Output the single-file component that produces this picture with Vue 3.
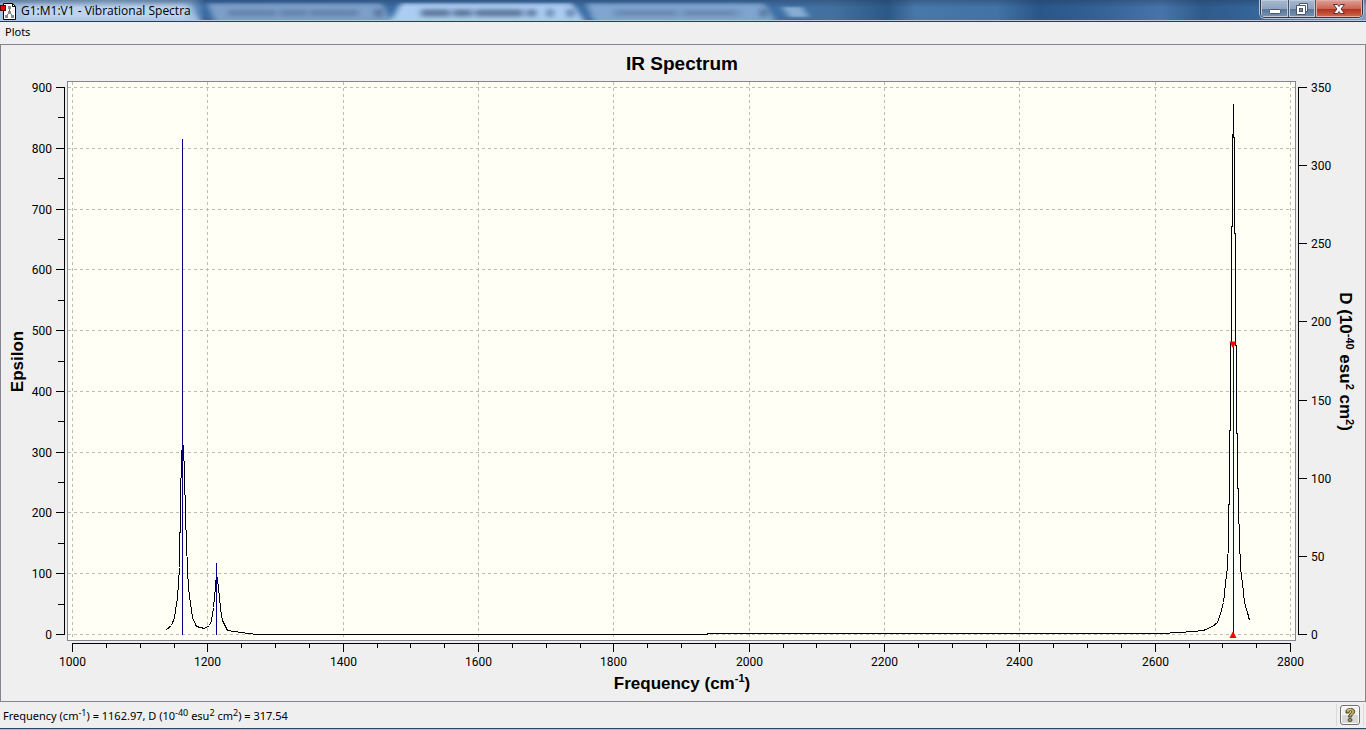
<script setup>
import { ref, computed, onMounted, onBeforeUnmount } from 'vue'

const area = ref(null)
const width = ref(window.innerWidth)
const height = ref(Math.max(window.innerHeight - 72, 300))
let observer = null

onMounted(() => {
  observer = new ResizeObserver(([entry]) => {
    width.value = Math.round(entry.contentRect.width)
    height.value = Math.round(entry.contentRect.height)
  })
  observer.observe(area.value)
})
onBeforeUnmount(() => observer.disconnect())

// inner plotting range in pixels
const x0 = 72
const y1 = 43
const x1 = computed(() => width.value - 76)
const y0 = computed(() => height.value - 68)

const px = (f) => Math.round(x0 + ((f - 1000) / 1800) * (x1.value - x0)) + 0.5
const py = (t) => Math.round(y0.value - t * (y0.value - y1)) + 0.5

const range = (from, to, step) => {
  const out = []
  for (let v = from; v <= to; v += step) out.push(v)
  return out
}
const xTicks = range(1000, 2800, 50).map((v) => ({ v, major: v % 200 === 0 }))
const yTicks = range(0, 900, 50).map((v) => ({ v, major: v % 100 === 0 }))
const rTicks = range(0, 350, 50)

// curve samples on a 1218 x 547 grid: frequency position, intensity
const samples = [
  [94, 5], [99, 9], [102, 17], [105, 37], [107, 67], [108, 135], [109, 176], [110, 193],
  [111, 187], [112, 161], [113, 118], [115, 65], [116, 47], [118, 31], [120, 17], [124, 8],
  [132, 6], [137, 9], [139, 14], [141, 27], [143, 47], [144, 61], [146, 47], [148, 26],
  [150, 14], [155, 4], [176, 1], [185, 0], [635, 0], [635, 1], [1088, 1], [1108, 2],
  [1131, 4], [1140, 8], [1145, 12], [1148, 21], [1151, 32], [1153, 51], [1155, 67],
  [1156, 94], [1157, 164], [1157, 204], [1158, 204], [1158, 292], [1159, 292], [1159, 408],
  [1160, 408], [1160, 500], [1161, 500], [1161, 531], [1161, 497], [1162, 497], [1162, 401],
  [1163, 401], [1163, 289], [1164, 289], [1164, 201], [1165, 201], [1165, 164], [1167, 94],
  [1168, 67], [1170, 51], [1172, 32], [1175, 22], [1177, 14],
]
const curve = computed(() =>
  samples.map(([u, v]) => `${px(1000 + (u / 1218) * 1800)},${py(v / 547)}`).join(' ')
)
const sticks = [
  { f: 1162.97, d: 317.54 },
  { f: 1213, d: 46 },
  { f: 2716, d: 186 },
]
</script>

<template>
  <div class="window">
    <header class="titlebar">
      <svg class="glass" viewBox="0 0 1366 21" preserveAspectRatio="none" aria-hidden="true">
        <defs>
          <filter id="soft" x="-10%" y="-50%" width="120%" height="200%"><feGaussianBlur stdDeviation="3 1" /></filter>
          <filter id="smear" filterUnits="userSpaceOnUse" x="0" y="-10" width="1366" height="42"><feGaussianBlur stdDeviation="3 2" /></filter>
          <linearGradient id="sky">
            <stop offset="0" stop-color="#85a6cb" /><stop offset=".08" stop-color="#9dbcdd" />
            <stop offset=".14" stop-color="#7da3cd" /><stop offset=".15" stop-color="#386aa3" />
            <stop offset=".57" stop-color="#3f6fa5" /><stop offset=".61" stop-color="#42719f" />
            <stop offset=".65" stop-color="#2b5887" /><stop offset=".67" stop-color="#4877a9" />
            <stop offset=".73" stop-color="#4272a6" /><stop offset=".76" stop-color="#2a5789" />
            <stop offset=".8" stop-color="#325f94" /><stop offset=".85" stop-color="#4774aa" />
            <stop offset=".88" stop-color="#2f5a8c" /><stop offset=".92" stop-color="#35659a" />
            <stop offset="1" stop-color="#7f9fc0" />
          </linearGradient>
          <linearGradient id="shade" x2="0" y2="1">
            <stop offset="0" stop-color="#1f3350" stop-opacity=".35" /><stop offset=".35" stop-color="#1f3350" stop-opacity="0" />
          </linearGradient>
        </defs>
        <rect width="1366" height="21" fill="url(#sky)" />
        <g filter="url(#soft)">
          <path d="M-5 3H188L200 22H-5Z" fill="#a7c3e2" />
          <path d="M207 3H382L392 22H215Z" fill="#7b9fca" />
          <path d="M401 3H572L585 22H390Z" fill="#abcdf3" />
          <path d="M586 3H764L776 22H594Z" fill="#7fa5d0" />
          <path d="M782 7H802L809 17H789Z" fill="#86acd4" />
        </g>
        <g filter="url(#smear)">
          <path d="M228 13H362" stroke="#526f96" stroke-width="6" stroke-dasharray="48 4 27 3" opacity=".6" />
          <path d="M421 13H536" stroke="#405a7b" stroke-width="7" stroke-dasharray="29 3 19 3 48 4" opacity=".75" />
          <path d="M614 13H742" stroke="#526f96" stroke-width="6" stroke-dasharray="64 4 55 3" opacity=".5" />
          <path d="M375 13H382M547 13H553M567 13H574M760 13H767" stroke="#425d82" stroke-width="8" opacity=".7" />
          <path d="M25 12H185" stroke="#d7e6f5" stroke-width="13" opacity=".5" />
        </g>
        <rect width="1366" height="21" fill="url(#shade)" />
      </svg>
      <svg class="app-icon" width="17" height="17" viewBox="0 0 17 17" aria-hidden="true">
        <path d="M3.5.5h9l3 3v13h-12z" fill="#fff" stroke="#000" />
        <path d="M12.5.5v3h3" fill="none" stroke="#000" />
        <path d="M9.500 5v5M9.500 9l-3 4M9.500 9l3 4" stroke="#666" stroke-width="1" fill="none" />
        <path d="M8 3h3v3H8zM8 8h3v3H8zM5 12h3v3H5zM11 12h3v3h-3z" fill="#8d8d8d" />
        <rect x=".5" y="2.500" width="5" height="5" fill="#ed0000" stroke="#500" />
      </svg>
      <h1>G1:M1:V1 - Vibrational Spectra</h1>
      <div class="controls">
        <button class="min" aria-label="Minimize">
          <svg width="14" height="14" viewBox="0 0 14 14"><rect x="1.500" y="7.500" width="11" height="4" rx="1" fill="#fff" stroke="#4b566b" /></svg>
        </button>
        <button class="max" aria-label="Restore">
          <svg width="14" height="14" viewBox="0 0 14 14"><path d="M4.500 1.500h8v8h-2v3h-9v-9h3z" fill="#fff" stroke="#4b566b" /><path d="M4.500 3.500h6v6" fill="none" stroke="#4b566b" /><rect x="4.500" y="6.500" width="3" height="3" fill="#7890ab" stroke="#4b566b" /></svg>
        </button>
        <button class="close" aria-label="Close">
          <svg width="14" height="14" viewBox="0 0 14 14"><path d="M1.500 2.500h4L7 4.500l1.500-2h4L9 7l3.500 4.500h-4L7 9.500l-1.500 2h-4L5 7z" fill="#fff" stroke="#5d3038" /></svg>
        </button>
      </div>
    </header>

    <nav class="menubar"><button>Plots</button></nav>

    <main ref="area" class="chart">
      <svg :width="width" :height="height" role="img" aria-label="IR Spectrum">
        <rect class="frame" x="0.5" y="0.5" :width="width - 1" :height="height - 1" />
        <rect class="plot" x="67.5" y="37.5" :width="x1 - 62" :height="y0 - 31" />

        <g class="grid">
          <template v-for="t in xTicks" :key="t.v">
            <line v-if="t.major" :x1="px(t.v)" :x2="px(t.v)" y1="38" :y2="y0 + 6" />
          </template>
          <template v-for="t in yTicks" :key="t.v">
            <line v-if="t.major" x1="68" :x2="x1 + 5" :y1="py(t.v / 900)" :y2="py(t.v / 900)" />
          </template>
        </g>

        <g class="axis">
          <path :d="`M64.5 ${y1}V${y0 + 1}M${x1 + 8.5} ${y1}V${y0 + 1}M${x0} ${y0 + 9.5}H${x1 + 1}`" />
          <line v-for="t in yTicks" :key="'l' + t.v" :x1="t.major ? 56 : 58" x2="64" :y1="py(t.v / 900)" :y2="py(t.v / 900)" />
          <line v-for="v in rTicks" :key="'r' + v" :x1="x1 + 9" :x2="x1 + 17" :y1="py(v / 350)" :y2="py(v / 350)" />
          <line v-for="t in xTicks" :key="'b' + t.v" :x1="px(t.v)" :x2="px(t.v)" :y1="y0 + 10" :y2="y0 + (t.major ? 18 : 14)" />
        </g>

        <polyline class="curve" :points="curve" />
        <line v-for="s in sticks" :key="s.f" class="stick" :x1="px(s.f)" :x2="px(s.f)" :y1="py(s.d / 350)" :y2="y0 + 1" />
        <path class="mark" :d="`M${px(2716) - 4} ${py(186 / 350) - 2}h7l-3 6h-1z`" />
        <path class="mark" :d="`M${px(2716) - 4} ${y0 + 4}h7l-3 -6h-1z`" />

        <g class="labels">
          <template v-for="t in yTicks" :key="t.v">
            <text v-if="t.major" x="52" :y="py(t.v / 900) + 4" text-anchor="end">{{ t.v }}</text>
          </template>
          <text v-for="v in rTicks" :key="v" :x="x1 + 21" :y="py(v / 350) + 4">{{ v }}</text>
          <template v-for="t in xTicks" :key="t.v">
            <text v-if="t.major" :x="px(t.v)" :y="y0 + 32" text-anchor="middle">{{ t.v }}</text>
          </template>
        </g>

        <text class="title" :x="width / 2 - 1" y="26" text-anchor="middle">IR Spectrum</text>
        <text class="axis-title" :x="width / 2 - 1" :y="y0 + 55" text-anchor="middle">Frequency (cm<tspan class="sup" dy="-7">-1</tspan><tspan dy="7">)</tspan></text>
        <text class="axis-title" :transform="`translate(23 ${(y0 + y1) / 2 + 1}) rotate(-90)`" text-anchor="middle">Epsilon</text>
        <text class="axis-title" :transform="`translate(${x1 + 50} ${(y0 + y1) / 2 + 1}) rotate(90)`" text-anchor="middle">D (10<tspan class="sup" dy="-6">-40</tspan><tspan dy="6"> esu</tspan><tspan class="sup" dy="-6">2</tspan><tspan dy="6"> cm</tspan><tspan class="sup" dy="-6">2</tspan><tspan dy="6">)</tspan></text>
      </svg>
    </main>

    <footer class="status">
      <p>Frequency (cm<sup>-1</sup>) = 1162.97, D (10<sup>-40</sup> esu<sup>2</sup> cm<sup>2</sup>) = 317.54</p>
      <div class="help-slot">
        <button class="help" aria-label="Help">
          <svg width="16" height="16" viewBox="0 0 16 16"><path d="M4 6V3.500C5 1.500 11 0 12.500 3.500C13.500 7 9.500 7.500 9.500 10H6.500C6.500 7 9.500 6.500 9.500 4.500C9 3 7 3.500 7 6Z" fill="#b6a75b" stroke="#453e1c" /><path d="M5.500 3.500Q7 2 9 2" stroke="#eee4ad" fill="none" /><ellipse cx="8" cy="13" rx="2" ry="1.500" fill="#b6a75b" stroke="#453e1c" /></svg>
        </button>
      </div>
    </footer>
  </div>
</template>

<style>
body {
  margin: 0;
  overflow: hidden;
}
</style>

<style scoped>
.window {
  box-sizing: border-box;
  display: flex;
  flex-direction: column;
  height: 100vh;
  min-height: 320px;
  background: #efefef;
  color: #000;
  font-family: "Noto Sans", "Open Sans", sans-serif;
  font-size: 11px;
}
button {
  margin: 0;
  padding: 0;
  border: 0;
  background: none;
  font: inherit;
  color: inherit;
}
.titlebar {
  position: relative;
  display: flex;
  align-items: flex-start;
  flex: 0 0 21px;
  border-bottom: 1px solid #233d60;
}
.glass {
  position: absolute;
  inset: 0;
  width: 100%;
  height: 21px;
}
.titlebar::after {
  content: "";
  position: absolute;
  left: 0;
  right: 0;
  bottom: 0;
  height: 1px;
  background: #b5cae2;
}
.app-icon {
  position: relative;
  margin-top: 3px;
}
.titlebar h1 {
  position: relative;
  flex: 1;
  margin: 0 0 0 4px;
  font-family: "Open Sans", "Noto Sans", sans-serif;
  font-size: 12px;
  font-weight: 400;
  line-height: 21px;
  white-space: nowrap;
}
.controls {
  position: relative;
  display: flex;
  margin-right: 3px;
  border: 1px solid #2b3a50;
  border-top: 0;
  border-radius: 0 0 5px 5px;
  box-shadow: 0 0 0 1px #b4c5da;
  overflow: hidden;
}
.controls button {
  display: flex;
  align-items: center;
  justify-content: center;
  height: 17px;
  background: linear-gradient(#a9b9cd, #8ea4bf 50%, #57749a 52%, #7894b3);
  box-shadow: inset 0 0 0 1px #bdcbdc;
}
.controls .min {
  width: 28px;
  border-right: 1px solid #40536e;
}
.controls .max {
  width: 27px;
  border-right: 1px solid #40536e;
}
.controls .close {
  width: 46px;
  background: linear-gradient(#dda196, #cb6657 50%, #b22f1b 52%, #cf6a4b);
  box-shadow: inset 0 0 0 1px #e0aca4;
}
.menubar {
  flex: 0 0 22px;
}
.menubar button {
  padding: 0 5px;
  line-height: 20px;
}
.chart {
  flex: 1;
  min-height: 0;
  overflow: hidden;
}
.chart svg {
  display: block;
}
.frame,
.plot {
  fill: none;
  stroke: #83868c;
  shape-rendering: crispEdges;
}
.plot {
  fill: #fffff5;
}
.grid line {
  stroke: #bcbcb4;
  stroke-dasharray: 3 3;
  shape-rendering: crispEdges;
}
.axis path,
.axis line,
.curve {
  fill: none;
  stroke: #000;
  shape-rendering: crispEdges;
}
.stick {
  stroke: #00008b;
  shape-rendering: crispEdges;
}
.mark {
  fill: #f00;
}
.labels {
  font-family: Roboto, "Liberation Sans", sans-serif;
  font-size: 12px;
}
.title,
.axis-title {
  font-family: "Liberation Sans", Arial, sans-serif;
  font-size: 19px;
  font-weight: 700;
}
.axis-title {
  font-size: 17px;
}
.axis-title .sup {
  font-size: 11px;
}
.status {
  display: flex;
  flex: 0 0 26px;
  align-items: center;
  justify-content: space-between;
  border-bottom: 1px solid #294867;
  box-shadow: 0 1px #a9bfd3;
  margin-bottom: 1px;
}
.status p {
  margin: 0 0 0 3px;
  padding-top: 2px;
  line-height: 20px;
  white-space: nowrap;
}
.status sup {
  font-size: 9px;
  line-height: 0;
  vertical-align: 4px;
}
.help-slot {
  display: flex;
  align-items: center;
  height: 22px;
  margin-right: 2px;
  padding: 0 3px;
  border-left: 1px solid #dadada;
  border-right: 1px solid #dadada;
}
.help {
  display: grid;
  place-items: center;
  width: 20px;
  height: 20px;
  border: 1px solid #707070;
  border-radius: 3px;
  background: linear-gradient(#f2f2f2 50%, #d8d8d8 50%);
  box-shadow: inset 0 0 0 1px #fcfcfc;
}
</style>
